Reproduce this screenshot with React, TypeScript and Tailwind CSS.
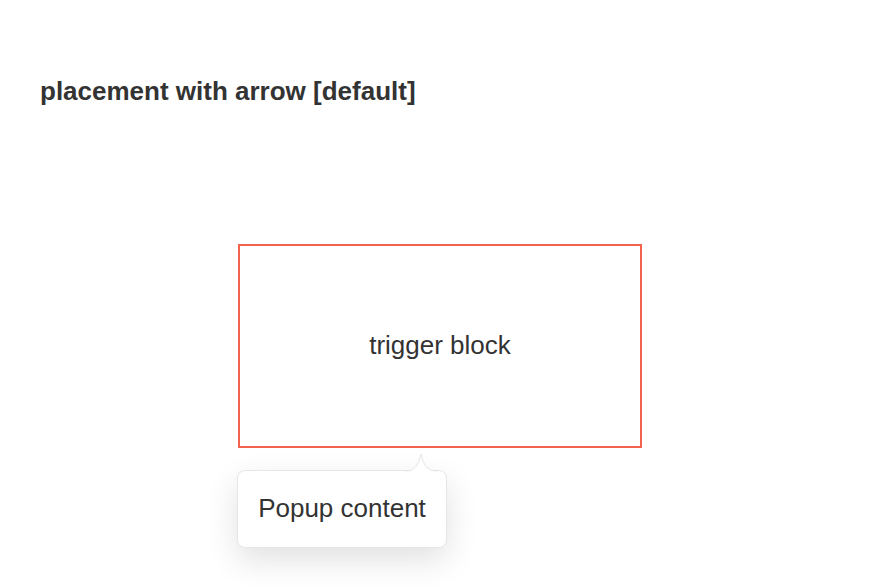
export default function App() {
  return (
    <div
      className="min-h-[586px] bg-white px-10 pt-[76px] text-[#333]"
      style={{ fontFamily: '"Liberation Sans", Arial, sans-serif' }}
    >
      {/* Title */}
      <h2 className="text-[26px] font-bold leading-[30px]">
        placement with arrow [default]
      </h2>

      {/* Trigger + popup */}
      <div className="mt-[138px] flex justify-center">
        <div className="relative">
          <div className="flex h-[204px] w-[404px] items-center justify-center border-2 border-[#f2624c] pb-[2px] text-[26px]">
            trigger block
          </div>

          <div className="absolute left-[-1px] top-[226px] z-10 w-[210px] rounded-lg border border-[#e6e6e6] bg-white shadow-[0_12px_32px_rgba(0,0,0,0.12)]">
            {/* Arrow */}
            <svg
              className="absolute left-[167px] top-[-18px]"
              width="32"
              height="19"
              viewBox="0 0 32 19"
            >
              <path
                d="M0 18.5 Q13 18.5 16 1 Q19 18.5 32 18.5"
                fill="white"
                stroke="#e6e6e6"
                strokeWidth="1"
              />
              <rect x="0" y="18.5" width="32" height="1" fill="white" />
            </svg>
            <div className="flex h-[76px] items-center justify-center pb-[2px] text-[26px]">
              Popup content
            </div>
          </div>
        </div>
      </div>
    </div>
  );
}
